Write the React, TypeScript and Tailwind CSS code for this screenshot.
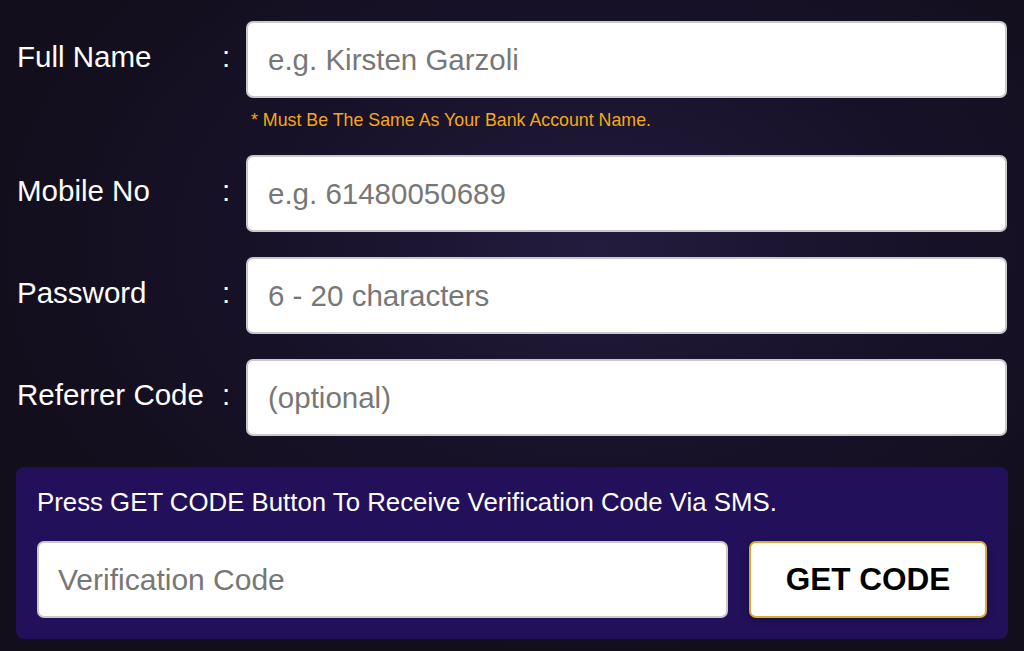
const fields = [
  { label: "Full Name", placeholder: "e.g. Kirsten Garzoli", note: "* Must Be The Same As Your Bank Account Name." },
  { label: "Mobile No", placeholder: "e.g. 61480050689" },
  { label: "Password", placeholder: "6 - 20 characters" },
  { label: "Referrer Code", placeholder: "(optional)" },
];

function Field({ label, placeholder, note }: { label: string; placeholder: string; note?: string }) {
  return (
    <div className="flex flex-col">
      <div className="flex items-center">
        <span className="w-[200px] pb-[4px] text-[29.5px] text-white">{label}</span>
        <span className="w-[18px] pb-[4px] text-center text-[29.5px] text-white">:</span>
        <input
          placeholder={placeholder}
          className="ml-[11px] h-[77px] flex-1 rounded-[7px] border-2 border-[#c9c9cc] bg-white px-[20px] text-[29.5px] text-[#333] outline-none placeholder:text-[#777]"
        />
      </div>
      {note && (
        <p className="mt-[13px] pl-[234px] text-[17.8px] leading-[19px] text-[#f5a818]">{note}</p>
      )}
    </div>
  );
}

export default function App() {
  return (
    <div
      className="min-h-[651px] w-full bg-[#14101e] bg-[radial-gradient(ellipse_at_58%_38%,#241c3e_0%,#18122a_35%,#120e1b_75%)] px-[16px] pt-[21px] pb-[13px]"
      style={{ fontFamily: "'Liberation Sans', Arial, sans-serif" }}
    >
      <div className="flex flex-col gap-[25px] px-[1px]">
        {fields.map((f) => (
          <Field key={f.label} {...f} />
        ))}
      </div>
      <div className="mt-[31px] rounded-[8px] bg-[#22115a] px-[21px] pt-[20px] pb-[21px]">
        <p className="text-[25.8px] leading-[30px] text-white">
          Press GET CODE Button To Receive Verification Code Via SMS.
        </p>
        <div className="mt-[24px] flex gap-[21px]">
          <input
            placeholder="Verification Code"
            className="h-[77px] flex-1 rounded-[7px] border-2 border-[#c9c9cc] bg-white px-[19px] text-[30px] text-[#333] outline-none placeholder:text-[#777]"
          />
          <button className="h-[77px] w-[238px] rounded-[7px] border-2 border-[#d9a93a] bg-white text-[31.5px] font-bold text-black shadow-[0_2px_6px_rgba(0,0,0,0.35)]">
            GET CODE
          </button>
        </div>
      </div>
    </div>
  );
}
